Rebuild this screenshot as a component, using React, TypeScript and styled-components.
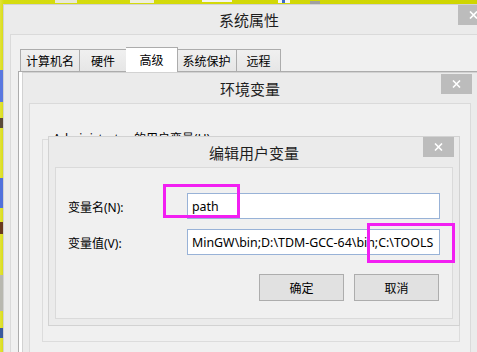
import React from "react";
import styled, { createGlobalStyle } from "styled-components";

const GlobalStyle = createGlobalStyle`
  html, body {
    margin: 0;
    padding: 0;
    background: #d2d700;
  }
  * {
    box-sizing: border-box;
  }
`;

const font = `"Segoe UI", "Noto Sans", "Noto Sans CJK SC", sans-serif`;

const Desktop = styled.div`
  position: relative;
  width: 477px;
  height: 352px;
  overflow: hidden;
  background: linear-gradient(90deg, #e2e23a 0px, #d6dc10 4px, #cfd500 100%);
  font-family: ${font};
  font-size: 12px;
  color: #000;
`;

const DeskIcon = styled.span<{ $x: number; $y: number; $w: number; $h: number; $c: string }>`
  position: absolute;
  left: ${(p) => p.$x}px;
  top: ${(p) => p.$y}px;
  width: ${(p) => p.$w}px;
  height: ${(p) => p.$h}px;
  background: ${(p) => p.$c};
`;

const Win = styled.div<{ $x: number; $y: number; $w: number; $h: number; $z: number }>`
  position: absolute;
  left: ${(p) => p.$x}px;
  top: ${(p) => p.$y}px;
  width: ${(p) => p.$w}px;
  height: ${(p) => p.$h}px;
  z-index: ${(p) => p.$z};
  display: flex;
  flex-direction: column;
  padding: 0 6px 6px;
  background: #ebebeb;
  border: 1px solid #d2d2d2;
`;

const TitleBar = styled.div<{ $h: number }>`
  flex: none;
  height: ${(p) => p.$h}px;
  display: flex;
  align-items: center;
  justify-content: center;
  font-size: 15px;
  color: #1e1e1e;
`;

const CloseBtn = styled.div<{ $top: number }>`
  position: absolute;
  top: ${(p) => p.$top}px;
  right: 5px;
  width: 31px;
  height: 20px;
  background: #bcbcbc;
  display: flex;
  align-items: center;
  justify-content: center;
`;

const Client = styled.div`
  flex: 1;
  display: flex;
  flex-direction: column;
  background: #f0f0f0;
  border: 1px solid #dadada;
  min-height: 0;
`;

/* 系统属性 */
const SysClient = styled(Client)`
  padding: 11px 0 0 7px;
`;

const TabRow = styled.div`
  display: flex;
  align-items: flex-end;
  padding-left: 2px;
  height: 25px;
  position: relative;
  z-index: 1;
`;

const Tab = styled.div<{ $w: number; $active?: boolean }>`
  width: ${(p) => p.$w}px;
  height: ${(p) => (p.$active ? 25 : 22)}px;
  margin-bottom: ${(p) => (p.$active ? -1 : 0)}px;
  margin-left: ${(p) => (p.$active ? -1 : 0)}px;
  margin-right: ${(p) => (p.$active ? -1 : 0)}px;
  border: 1px solid #acacac;
  border-bottom: none;
  background: ${(p) => (p.$active ? "#ffffff" : "linear-gradient(#f0f0f0, #e6e6e6)")};
  display: flex;
  justify-content: center;
  align-items: ${(p) => (p.$active ? "flex-start" : "center")};
  padding-top: ${(p) => (p.$active ? 3 : 1)}px;
  font-size: 12px;
  position: relative;
  z-index: ${(p) => (p.$active ? 2 : 1)};
  & + & {
    border-left: ${(p) => (p.$active ? "1px solid #acacac" : "none")};
  }
`;

const TabPanel = styled.div`
  flex: 1;
  background: #ffffff;
  border-top: 1px solid #acacac;
  border-left: 1px solid #acacac;
`;

/* 环境变量 */
const EnvClient = styled(Client)`
  padding: 27px 10px 0 12px;
`;

const GroupBox = styled.fieldset`
  margin: 0;
  padding: 0;
  height: 211px;
  border: 1px solid #dcdcdc;
  min-width: 0;
`;

const GroupCaption = styled.legend`
  margin-left: 8px;
  padding: 0 2px;
  font-size: 12px;
  line-height: 16px;
`;

/* 编辑用户变量 */
const EditClient = styled(Client)`
  padding: 25px 13px 0 12px;
  gap: 10px;
`;

const FieldRow = styled.div`
  display: grid;
  grid-template-columns: 119px 253px;
  align-items: center;
`;

const FieldLabel = styled.label`
  font-size: 12px;
  padding-top: 1px;
`;

const TextBox = styled.div`
  height: 26px;
  border: 1px solid #98b2d7;
  background: #ffffff;
  padding: 0 4px;
  display: flex;
  align-items: center;
  overflow: hidden;
  white-space: nowrap;
  font-size: 12.4px;
`;

const ButtonRow = styled.div`
  display: flex;
  justify-content: flex-end;
  gap: 10px;
  margin-top: 9px;
`;

const Button = styled.div`
  width: 85px;
  height: 27px;
  border: 1px solid #adadad;
  background: #e1e1e1;
  display: flex;
  align-items: center;
  justify-content: center;
  font-size: 12px;
`;

const Highlight = styled.div<{ $x: number; $y: number; $w: number; $h: number }>`
  position: absolute;
  left: ${(p) => p.$x}px;
  top: ${(p) => p.$y}px;
  width: ${(p) => p.$w}px;
  height: ${(p) => p.$h}px;
  border: 3px solid #f21ff2;
  z-index: 10;
`;

function CloseX() {
  return (
    <svg width="9" height="8" viewBox="0 0 9 8">
      <path d="M1 0.5 L8 7.5 M8 0.5 L1 7.5" stroke="#ffffff" strokeWidth="1.6" />
    </svg>
  );
}

const tabs = [
  { name: "计算机名", w: 60 },
  { name: "硬件", w: 47 },
  { name: "高级", w: 52, active: true },
  { name: "系统保护", w: 60 },
  { name: "远程", w: 44 },
];

export default function App() {
  return (
    <Desktop>
      <GlobalStyle />

      <DeskIcon $x={55} $y={0} $w={22} $h={3} $c="#e8e8d8" />
      <DeskIcon $x={130} $y={0} $w={24} $h={3} $c="#eeeedd" />
      <DeskIcon $x={202} $y={0} $w={30} $h={2} $c="#f4f4ef" />
      <DeskIcon $x={278} $y={0} $w={12} $h={3} $c="#f7f7f7" />
      <DeskIcon $x={282} $y={0} $w={3} $h={3} $c="#3a6bc8" />
      <DeskIcon $x={310} $y={1} $w={10} $h={3} $c="#a0a0a0" />
      <DeskIcon $x={0} $y={70} $w={3} $h={32} $c="#5a78e0" />
      <DeskIcon $x={0} $y={118} $w={3} $h={10} $c="#5a4a3a" />
      <DeskIcon $x={0} $y={178} $w={3} $h={30} $c="#5070dc" />
      <DeskIcon $x={0} $y={222} $w={3} $h={12} $c="#6a3a20" />
      <DeskIcon $x={0} $y={275} $w={3} $h={36} $c="#b8b8b0" />
      <DeskIcon $x={0} $y={328} $w={3} $h={10} $c="#3a5aa0" />

      <Win $x={3} $y={4} $w={492} $h={420} $z={1}>
        <TitleBar $h={29}>系统属性</TitleBar>
        <CloseBtn $top={0}>
          <CloseX />
        </CloseBtn>
        <SysClient>
          <TabRow>
            {tabs.map((t) => (
              <Tab key={t.name} $w={t.w} $active={t.active}>
                {t.name}
              </Tab>
            ))}
          </TabRow>
          <TabPanel />
        </SysClient>
      </Win>

      <Win $x={22} $y={72} $w={456} $h={320} $z={2}>
        <TitleBar $h={30}>环境变量</TitleBar>
        <CloseBtn $top={1}>
          <CloseX />
        </CloseBtn>
        <EnvClient>
          <GroupBox>
            <GroupCaption>Administrator 的用户变量(U)</GroupCaption>
          </GroupBox>
        </EnvClient>
      </Win>

      <Win $x={48} $y={136} $w={412} $h={190} $z={3}>
        <TitleBar $h={30}>编辑用户变量</TitleBar>
        <CloseBtn $top={0}>
          <CloseX />
        </CloseBtn>
        <EditClient>
          <FieldRow>
            <FieldLabel>变量名(N):</FieldLabel>
            <TextBox>path</TextBox>
          </FieldRow>
          <FieldRow>
            <FieldLabel>变量值(V):</FieldLabel>
            <TextBox>MinGW\bin;D:\TDM-GCC-64\bin;C:\TOOLS</TextBox>
          </FieldRow>
          <ButtonRow>
            <Button>确定</Button>
            <Button>取消</Button>
          </ButtonRow>
        </EditClient>
      </Win>

      <Highlight $x={163} $y={184} $w={77} $h={34} />
      <Highlight $x={367} $y={223} $w={88} $h={40} />
    </Desktop>
  );
}
